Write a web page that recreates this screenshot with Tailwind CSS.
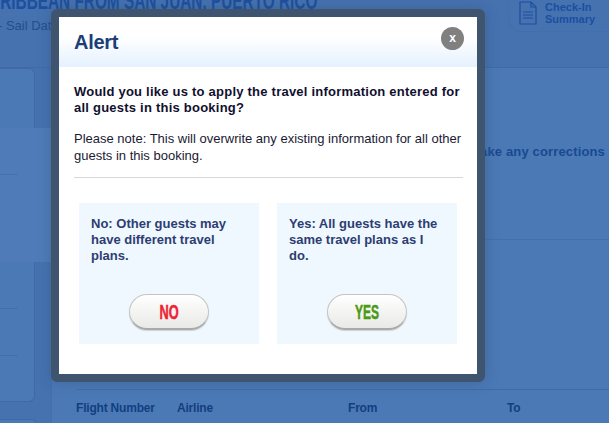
<!DOCTYPE html>
<html lang="en">
<head>
  <meta charset="UTF-8">
  <title>Alert</title>
  <script src="https://cdn.jsdelivr.net/npm/@tailwindcss/browser@4"></script>
</head>
<body class="bg-[#4b79b6] font-['Liberation_Sans',Arial,sans-serif] overflow-hidden">
  <div class="relative w-[609px] h-[423px] overflow-hidden">

    <!-- page behind the overlay -->
    <header class="h-[68px] flex border-b border-[#3f6ca8] bg-[#4672b0]">
      <div class="flex-1 min-w-0 overflow-hidden">
        <div class="h-[10px] leading-[10px] -mt-[4px] text-[24px] font-bold text-[#1c4f9f] whitespace-nowrap origin-left scale-x-[.64] -ml-[22px]">CARIBBEAN FROM SAN JUAN, PUERTO RICO</div>
        <div class="mt-[10px] -ml-[2px] text-[13px] text-[#214f8f] whitespace-nowrap">- Sail Date</div>
      </div>
      <div class="w-[101px] h-[32px] border-l border-b border-[#4270ae] rounded-bl-xl flex items-start gap-[8px] pl-[10px]">
        <svg class="w-[18px] h-[24px] mt-[1px]" viewBox="0 0 18 24" fill="none" stroke="#1c4f9f" stroke-width="1.2"><path d="M1 1h11l5 5v17H1z"/><path d="M12 1v5h5M4 11h10M4 14h10M4 17h10"/></svg>
        <div class="text-[11px] leading-[12px] font-bold text-[#1c4f9f] mt-[1px]">Check-In<br>Summary</div>
      </div>
    </header>

    <div class="flex h-[355px]">
      <aside class="w-[52px] shrink-0 border-r border-[#4270ae] bg-[#4672b0] flex flex-col">
        <div class="w-[35px] h-[60px] rounded-tr-md border-t border-r border-[#4069a6] bg-[#4b79b6]"></div>
        <div class="w-[51px] h-[134px] bg-[#4f7cb8] flex flex-col">
          <div class="w-[18px] mt-[46px] border-t border-[#4672b0]"></div>
        </div>
        <div class="w-[35px] h-[140px] rounded-br-md border-r border-b border-[#4069a6] bg-[#4b79b6] flex flex-col">
          <div class="w-[18px] mt-[46px] border-t border-[#4270ae]"></div>
          <div class="w-[18px] mt-[46px] border-t border-[#4270ae]"></div>
        </div>
        <div class="w-[36px] h-[4px] mt-[17px] rounded-tr-md border-t border-r border-[#4069a6] bg-[#4b79b6]"></div>
      </aside>
      <main class="flex-1 min-w-0">
        <div class="h-[171px] pt-[74px] text-right pr-[4px] text-[13px] font-bold tracking-[.15px] text-[#184a90] whitespace-nowrap">make any corrections</div>
        <div class="h-[150px] border-t border-[#4270ae]"></div>
        <div class="ml-[24px] pt-[9px] border-t border-[#3f6ca8] flex text-[12px] font-bold tracking-[-.2px] text-[#123f80]">
          <span class="w-[101px]">Flight Number</span>
          <span class="w-[171px]">Airline</span>
          <span class="w-[159px]">From</span>
          <span>To</span>
        </div>
      </main>
    </div>

    <!-- alert -->
    <div class="absolute left-[51px] top-[9px] w-[434px] h-[373px] border-8 border-[#3f556f] rounded-md bg-white shadow-[0_0_14px_rgba(50,80,120,.45)]">
      <div class="relative h-[50px] bg-gradient-to-b from-white from-40% to-[#e4f1fe] pl-[15px] pt-[12px] text-[20px] leading-[26px] font-bold tracking-[-.3px] text-[#1b3e78]">
        Alert
        <button class="absolute right-[13px] top-[10px] w-[23px] h-[23px] rounded-full bg-[#808080] text-white text-[12px] leading-[21px] font-bold">x</button>
      </div>
      <div class="px-[15px] pt-[17px]">
        <p class="text-[13px] leading-[16px] font-bold tracking-[.23px] text-[#10102e]">Would you like us to apply the travel information entered for all guests in this booking?</p>
        <p class="mt-[14px] text-[13px] leading-[17px] text-[#1a1a33] w-[400px]">Please note: This will overwrite any existing information for all other guests in this booking.</p>
        <div class="mt-[13px] w-[389px] border-t border-[#d8d8d8]"></div>
        <div class="mt-[25px] ml-[5px] flex gap-[18px]">
          <div class="w-[180px] h-[141px] bg-[#eff8ff] px-[12px] pt-[13px] flex flex-col">
            <p class="text-[13px] leading-[16px] font-bold text-[#2d3d72]">No: Other guests may have different travel plans.</p>
            <button class="mt-auto mb-[14px] mx-auto w-[80px] h-[36px] rounded-[18px] border border-[#c4c4c0] border-b-2 border-b-[#a9a9a5] bg-gradient-to-b from-white to-[#e9e9e7] shadow-[0_1px_1px_rgba(0,0,0,.15)] text-[20px] font-bold text-[#ee2233]"><span class="inline-block scale-x-[.64] [-webkit-text-stroke:.5px]">NO</span></button>
          </div>
          <div class="w-[180px] h-[141px] bg-[#eff8ff] px-[12px] pt-[13px] flex flex-col">
            <p class="text-[13px] leading-[16px] font-bold text-[#2d3d72]">Yes: All guests have the same travel plans as I do.</p>
            <button class="mt-auto mb-[14px] mx-auto w-[80px] h-[36px] rounded-[18px] border border-[#c4c4c0] border-b-2 border-b-[#a9a9a5] bg-gradient-to-b from-white to-[#e9e9e7] shadow-[0_1px_1px_rgba(0,0,0,.15)] text-[20px] font-bold text-[#4a9a12]"><span class="inline-block scale-x-[.6] [-webkit-text-stroke:.5px]">YES</span></button>
          </div>
        </div>
      </div>
    </div>
  </div>
</body>
</html>
